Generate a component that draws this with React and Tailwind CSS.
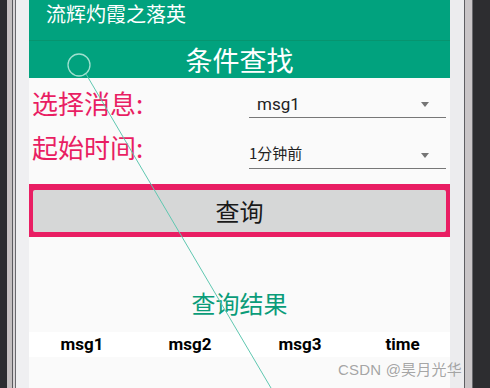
export default function App() {
  const cjk = { fontFamily: '"Noto Sans CJK SC", "Noto Sans", sans-serif' };
  const roboto = { fontFamily: 'Roboto, "Noto Sans CJK SC", sans-serif' };
  return (
    <div className="relative flex w-[490px] h-[388px] overflow-hidden bg-[#2d2d30]" style={cjk}>
      {/* left frame */}
      <div className="flex w-[29px] h-full shrink-0">
        <div className="w-[7px] bg-[#2b2c30]" />
        <div className="w-[5px] bg-[#c4c0c1]" />
        <div className="w-[1px] bg-[#5a5a5e]" />
        <div className="w-[2px] bg-[#d8d5d7]" />
        <div className="w-[1px] bg-[#6a6a6e]" />
        <div className="flex-1 bg-[#efeff1]" />
      </div>

      {/* screen */}
      <div className="flex flex-col w-[421px] h-full shrink-0 bg-[#fafafa]">
        <div className="h-[40px] bg-[#01a27e] text-white text-[20px] leading-[28px] pl-[17px]">
          流辉灼霞之落英
        </div>
        <div className="h-[1px] bg-[#07946f]" />
        <div className="h-[37px] bg-[#01a27e] text-white text-[27px] leading-[37px] text-center">
          条件查找
        </div>

        <div className="flex items-center h-[46px] pt-[4px]">
          <div className="w-[220px] pl-[3px] text-[#e91e63] text-[26px] leading-[30px]">选择消息:</div>
          <div className="relative w-[197px] h-[30px] border-b-[1.5px] border-[#777]">
            <span className="absolute left-[8px] top-[4px] text-[17px] text-[#222]" style={roboto}>msg1</span>
            <span className="absolute right-[17px] top-[14px] w-0 h-0 border-l-[4px] border-r-[4px] border-t-[5px] border-l-transparent border-r-transparent border-t-[#757575]" />
          </div>
        </div>

        <div className="flex items-center h-[51px]">
          <div className="w-[220px] pl-[3px] text-[#e91e63] text-[26px] leading-[30px] mt-[-6px]">起始时间:</div>
          <div className="relative w-[197px] h-[30px] border-b-[1.5px] border-[#777] mt-[8px]">
            <span className="absolute left-0 top-[3px] text-[15px] text-[#222]">1分钟前</span>
            <span className="absolute right-[17px] top-[14px] w-0 h-0 border-l-[4px] border-r-[4px] border-t-[5px] border-l-transparent border-r-transparent border-t-[#757575]" />
          </div>
        </div>

        <div className="mt-[9px] h-[53px] bg-[#e91e63] pt-[6px] pb-[5px] px-[4px]">
          <div className="h-full bg-[#d6d7d7] rounded-[2px] flex items-center justify-center text-[24px] text-[#1a1a1a]">
            查询
          </div>
        </div>

        <div className="h-[51px]" />
        <div className="text-center text-[#0a9c79] text-[24px] leading-[30px]">查询结果</div>
        <div className="h-[14px]" />

        <div className="grid grid-cols-[106px_110px_110px_95px] h-[25px] bg-white font-bold text-[17px] text-black items-center text-center" style={roboto}>
          <div>msg1</div>
          <div>msg2</div>
          <div>msg3</div>
          <div>time</div>
        </div>
      </div>

      {/* right frame */}
      <div className="flex w-[40px] h-full shrink-0">
        <div className="w-[14px] bg-[#ececee]" />
        <div className="w-[1px] bg-[#5e5e62]" />
        <div className="w-[7px] bg-[#c9c5c7]" />
        <div className="w-[1px] bg-[#6a6a6e]" />
        <div className="flex-1 bg-[#2d2d30]" />
      </div>

      {/* touch indicator overlay */}
      <svg className="absolute left-0 top-0 pointer-events-none" width="490" height="388">
        <circle cx="79" cy="65" r="11" fill="none" stroke="#9fe0cf" strokeWidth="1.3" />
        <line x1="86" y1="74" x2="271" y2="388" stroke="#5fc7b0" strokeWidth="1" />
      </svg>

      {/* watermark */}
      <div className="absolute left-[338px] top-[359px] text-[15px] text-[#9a9a9a]/90 tracking-[0.2px]" style={{ fontFamily: '"Liberation Sans", "Noto Sans CJK SC", sans-serif' }}>
        CSDN @昊月光华
      </div>
    </div>
  );
}
